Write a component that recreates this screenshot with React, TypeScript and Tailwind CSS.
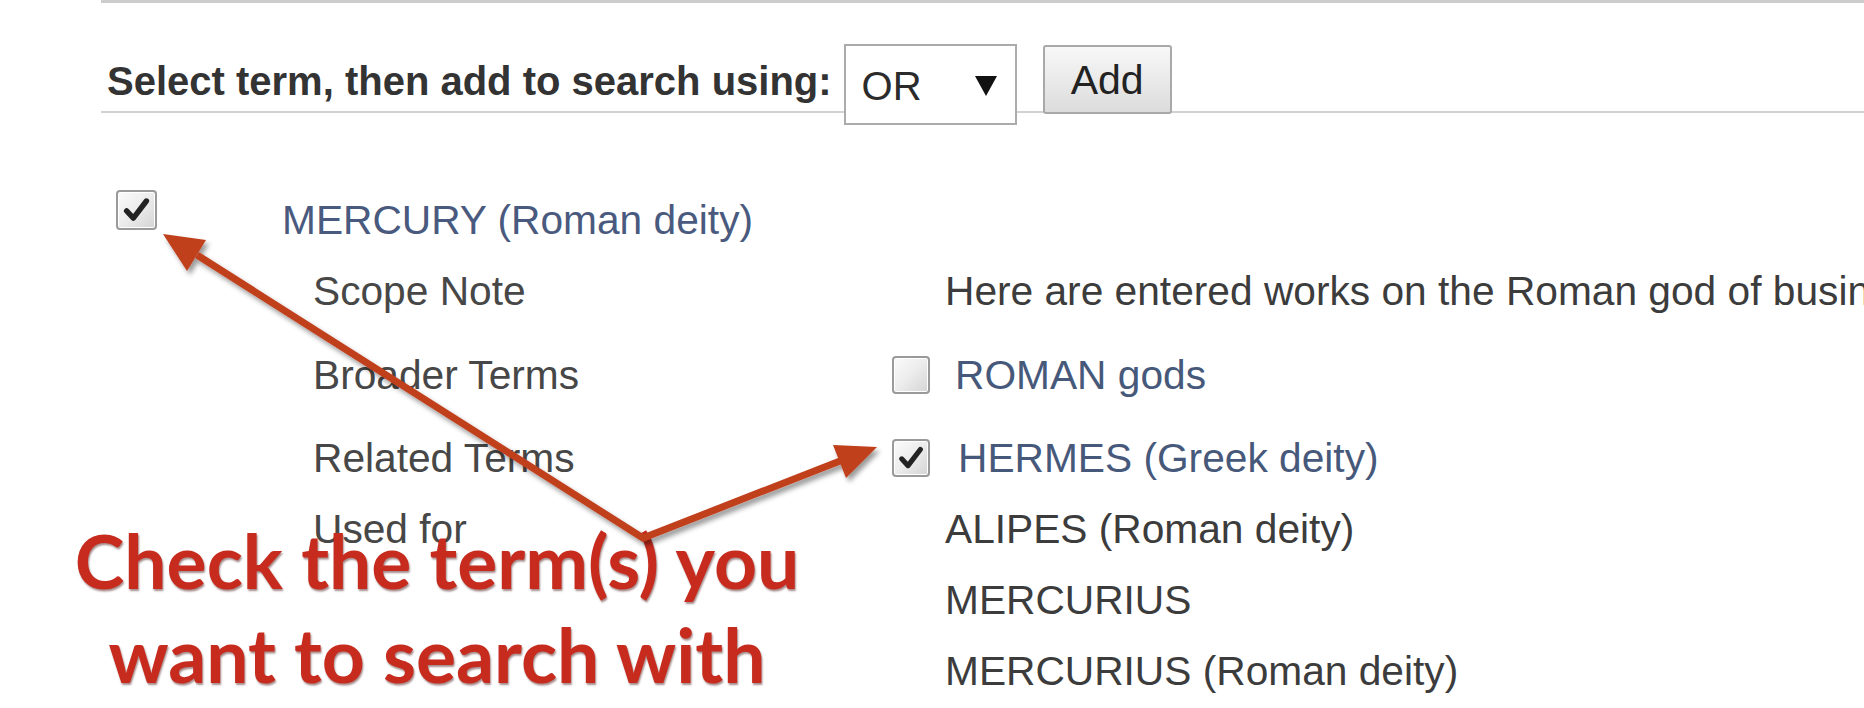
import React from "react";

function Checkbox({ checked, w, h }: { checked: boolean; w: string; h: string }) {
  return (
    <div
      className={`${w} ${h} shrink-0 rounded-[4px] border-2 border-[#9a9a9a] bg-linear-to-br from-[#fbfbfb] via-[#ececec] to-[#d4d4d4] shadow-[inset_0_0_0_1px_#ffffff] flex items-center justify-center`}
    >
      {checked && (
        <svg viewBox="0 0 40 40" className="w-full h-full">
          <path
            d="M9 21 L16.5 29 L31 10"
            fill="none"
            stroke="#222222"
            strokeWidth="6"
            strokeLinecap="round"
            strokeLinejoin="round"
          />
        </svg>
      )}
    </div>
  );
}

function Row({
  label,
  children,
  extra = "",
}: {
  label: string;
  children: React.ReactNode;
  extra?: string;
}) {
  return (
    <div className={`flex items-center h-[71px] pl-[212px] ${extra}`}>
      <span className="w-[579px] shrink-0 text-[#474747] whitespace-nowrap">{label}</span>
      {children}
    </div>
  );
}

export default function App() {
  return (
    <div className="relative w-[1864px] h-[708px] overflow-hidden bg-white font-['Liberation_Sans',Arial,sans-serif] text-[40.7px] leading-[46px]">
      <div className="ml-[101px] h-[3px] bg-[#cdcdcd]" />

      <div className="ml-[101px] h-[110px] border-b-2 border-[#d2d2d2] flex items-start">
        <span className="ml-[6px] mt-[55px] font-bold text-[40px] text-[#333333] whitespace-nowrap">
          Select term, then add to search using:
        </span>
        <div className="ml-[12px] mt-[41px] w-[173px] h-[81px] shrink-0 border-2 border-[#ababab] bg-white flex items-center pl-[16px] pr-[18px] pt-[2px]">
          <span className="text-[40px] text-[#2b2b2b]">OR</span>
          <svg viewBox="0 0 22 20" className="ml-auto w-[22px] h-[20px]">
            <polygon points="0,0 22,0 11,20" fill="#111111" />
          </svg>
        </div>
        <button className="ml-[26px] mt-[42px] w-[129px] h-[69px] shrink-0 border-2 border-[#a9a9a9] rounded-[3px] bg-linear-to-b from-[#f8f8f8] to-[#dcdcdc] text-[#222222] text-[41px] leading-[46px] font-['Liberation_Sans',Arial,sans-serif]">
          Add
        </button>
      </div>

      <div className="ml-[101px] mt-[71px]">
        <div className="flex items-start h-[71px]">
          <div className="ml-[15px] mt-[6px]">
            <Checkbox checked w="w-[41px]" h="h-[40px]" />
          </div>
          <span className="ml-[125px] self-center text-[#4a5a7e] whitespace-nowrap">
            MERCURY (Roman deity)
          </span>
        </div>

        <Row label="Scope Note">
          <span className="pl-[53px] shrink-0 whitespace-nowrap text-[#3c3c3c]">
            Here are entered works on the Roman god of business and commerce.
          </span>
        </Row>

        <Row label="Broader Terms" extra="mt-[13px]">
          <Checkbox checked={false} w="w-[38px]" h="h-[38px]" />
          <span className="ml-[25px] whitespace-nowrap text-[#47597b]">ROMAN gods</span>
        </Row>

        <Row label="Related Terms" extra="mt-[12px]">
          <Checkbox checked w="w-[38px]" h="h-[38px]" />
          <span className="ml-[28px] whitespace-nowrap text-[#47597b]">HERMES (Greek deity)</span>
        </Row>

        <Row label="Used for">
          <span className="pl-[53px] whitespace-nowrap text-[#3c3c3c]">ALIPES (Roman deity)</span>
        </Row>
        <Row label="">
          <span className="pl-[53px] whitespace-nowrap text-[#3c3c3c]">MERCURIUS</span>
        </Row>
        <Row label="">
          <span className="pl-[53px] whitespace-nowrap text-[#3c3c3c]">MERCURIUS (Roman deity)</span>
        </Row>
      </div>

      <div className="absolute left-0 top-[513px] w-[874px] text-center font-['Lato','Open_Sans',sans-serif] font-bold text-[75px] leading-[94px] text-[#c72b1e] [text-shadow:1px_2px_2px_rgba(60,0,0,0.45)] whitespace-nowrap">
        Check the term(s) you
        <br />
        want to search with
      </div>

      <svg
        className="absolute inset-0 w-[1864px] h-[708px] pointer-events-none"
        viewBox="0 0 1864 708"
      >
        <defs>
          <filter id="sh" x="-20%" y="-20%" width="140%" height="140%">
            <feDropShadow dx="3" dy="4" stdDeviation="2.5" floodColor="#000" floodOpacity="0.4" />
          </filter>
        </defs>
        <g filter="url(#sh)">
          <polyline
            points="197,255 643,538 840,461"
            fill="none"
            stroke="#c03f1d"
            strokeWidth="7"
            strokeLinejoin="miter"
          />
          <polygon points="163,234 206,240 187,271" fill="#c03f1d" />
          <polygon points="877,447 846,478 833,445" fill="#c03f1d" />
        </g>
      </svg>
    </div>
  );
}
